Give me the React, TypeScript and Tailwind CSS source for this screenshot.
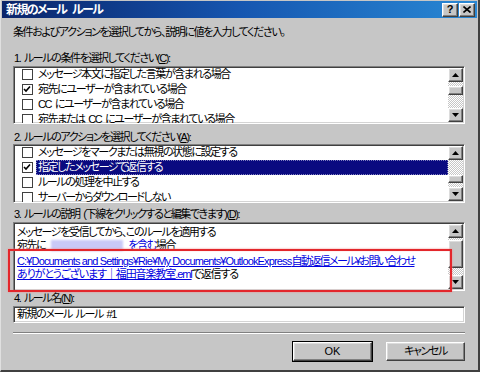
import { FC, ReactNode } from "react";

const raised =
  "border border-t-white border-l-white border-r-[#404040] border-b-[#404040] shadow-[inset_-1px_-1px_0_#808080,inset_1px_1px_0_#dcdcdc]";
const sunken =
  "border border-t-[#808080] border-l-[#808080] border-r-white border-b-white shadow-[inset_1px_1px_0_#404040,inset_-1px_-1px_0_#d4d4d4]";
const link = "text-[#0000e0] underline underline-offset-1";

const Arrow: FC<{ up?: boolean }> = ({ up }) => (
  <div className={`h-[14px] w-[15px] bg-[#c6c6c6] flex items-center justify-center shrink-0 ${raised}`}>
    <svg width="7" height="4" viewBox="0 0 7 4">
      {up ? <path d="M3.5 0 L7 4 L0 4 Z" fill="#000" /> : <path d="M0 0 L7 0 L3.5 4 Z" fill="#000" />}
    </svg>
  </div>
);

const ScrollBar: FC<{ before: number; thumb: number }> = ({ before, thumb }) => (
  <div className="w-[15px] h-full flex flex-col bg-[repeating-conic-gradient(#c6c6c6_0_25%,#ffffff_0_50%)] bg-[length:2px_2px]">
    <Arrow up />
    <div className="flex-1 flex flex-col">
      <div style={{ height: before }} />
      <div className={`w-[15px] bg-[#c6c6c6] ${raised}`} style={{ height: thumb }} />
    </div>
    <Arrow />
  </div>
);

const Check: FC<{ on?: boolean }> = ({ on }) => (
  <div className="w-[11px] h-[11px] border border-[#404040] bg-white flex items-center justify-center shrink-0">
    {on && (
      <svg width="9" height="9" viewBox="0 0 9 9">
        <path d="M1 4 L3 6 L7 1.5" stroke="#000" strokeWidth="1.6" fill="none" />
      </svg>
    )}
  </div>
);

const Row: FC<{ on?: boolean; sel?: boolean; children: ReactNode }> = ({ on, sel, children }) => (
  <div className="h-[15px] flex items-center pl-[8px] shrink-0">
    <Check on={on} />
    <span
      className={`ml-[3px] h-[15px] flex-1 flex items-center pl-[2px] whitespace-pre ${
        sel ? "bg-[#0a0a80] text-white outline outline-1 outline-dotted outline-offset-[-1px] outline-[#8080c0]" : ""
      }`}
    >
      {children}
    </span>
  </div>
);

const ListBox: FC<{ h: number; before: number; thumb: number; children: ReactNode }> = ({
  h,
  before,
  thumb,
  children,
}) => (
  <div className={`bg-white flex ${sunken}`} style={{ height: h }}>
    <div className="flex-1 flex flex-col overflow-hidden">{children}</div>
    <div className="py-[1px] pr-[1px]">
      <ScrollBar before={before} thumb={thumb} />
    </div>
  </div>
);

const Label: FC<{ children: ReactNode }> = ({ children }) => (
  <div className="h-[14px] leading-[14px] whitespace-pre">{children}</div>
);

const App: FC = () => {
  return (
    <div className="w-[480px] h-[372px] overflow-hidden bg-[#c6c6c6] text-[11px] tracking-[-1.4px] [word-spacing:2px] text-black font-['Liberation_Sans','Noto_Sans_CJK_JP',sans-serif] [font-feature-settings:'palt'] border-l border-l-[#e0e0e0] border-r-2 border-r-[#404040] border-b-2 border-b-[#404040] flex flex-col">
      <header className="h-[17px] mx-[1px] mt-[1px] flex items-center justify-between bg-gradient-to-r from-[#0a246a] via-[#1656b0] to-[#2a88d4]">
        <h1 className="pl-[4px] text-white font-bold text-[12px] tracking-[-1.6px] [word-spacing:4px]">新規のメール ルール</h1>
        <div className="flex pr-[2px]">
          <div className={`w-[16px] h-[14px] bg-[#c6c6c6] flex items-center justify-center font-bold text-[11px] leading-none tracking-normal ${raised}`}>
            ?
          </div>
          <div className={`ml-[1px] w-[16px] h-[14px] bg-[#c6c6c6] flex items-center justify-center ${raised}`}>
            <svg width="8" height="7" viewBox="0 0 8 7">
              <path d="M0.5 0.5 L7.5 6.5 M7.5 0.5 L0.5 6.5" stroke="#000" strokeWidth="1.6" />
            </svg>
          </div>
        </div>
      </header>

      <section className="pl-[12px] pr-[13px] flex flex-col">
        <div className="mt-[7px]">
          <Label>条件およびアクションを選択してから、説明に値を入力してください。</Label>
        </div>

        <div className="mt-[12px] pl-[1px]">
          <Label>
            1. ルールの条件を選択してください(<u>C</u>):
          </Label>
        </div>
        <div className="mt-[1px]">
          <ListBox h={58} before={4} thumb={9}>
            <Row>メッセージ本文に指定した言葉が含まれる場合</Row>
            <Row on>宛先にユーザーが含まれている場合</Row>
            <Row>CC にユーザーが含まれている場合</Row>
            <Row>宛先または CC にユーザーが含まれている場合</Row>
          </ListBox>
        </div>

        <div className="mt-[6px] pl-[1px]">
          <Label>
            2. ルールのアクションを選択してください(<u>A</u>):
          </Label>
        </div>
        <div className="mt-[0px]">
          <ListBox h={59} before={15} thumb={8}>
            <Row>メッセージをマークまたは無視の状態に設定する</Row>
            <Row on sel>
              指定したメッセージで返信する
            </Row>
            <Row>ルールの処理を中止する</Row>
            <Row>サーバーからダウンロードしない</Row>
          </ListBox>
        </div>

        <div className="mt-[4px] pl-[1px]">
          <Label>
            3. ルールの説明 (下線をクリックすると編集できます)(<u>D</u>):
          </Label>
        </div>
        <div className="mt-[1px] relative">
          <div className={`bg-white flex h-[69px] ${sunken}`}>
            <div className="flex-1 pl-[3px] pt-[3px] leading-[13px] overflow-hidden">
              <div className="whitespace-nowrap">メッセージを受信してから、このルールを適用する</div>
              <div className="whitespace-nowrap flex items-center">
                宛先に
                <span className="inline-block w-[72px] h-[11px] ml-[6px] mr-[5px] bg-[#c9c9f7] blur-[1px]" />
                <span className={link}>を含む</span>場合
              </div>
              <div className={`mt-[3px] whitespace-nowrap tracking-[-1.6px] ${link}`}>
                <span className="tracking-[-0.85px] [word-spacing:0px]">C:¥Documents and Settings¥Rie¥My Documents¥OutlookExpress</span>
                自動返信メール¥お問い合わせ
              </div>
              <div className="whitespace-nowrap tracking-[-1.1px]">
                <span className={link}>ありがとうございます｜福田音楽教室.eml</span>で返信する
              </div>
            </div>
            <div className="py-[1px] pr-[1px]">
              <ScrollBar before={2} thumb={28} />
            </div>
          </div>
          <div className="absolute left-[-5px] top-[27px] w-[444px] h-[43px] border-2 border-[#e3262b] shadow-[0_0_2px_#f09090,inset_0_0_1px_#f09090]" />
        </div>

        <div className="mt-[0px] pl-[1px]">
          <Label>
            4. ルール名(<u>N</u>):
          </Label>
        </div>
        <div className={`mt-[1px] h-[17px] bg-white pl-[3px] flex items-center whitespace-pre ${sunken}`}>
          新規のメール ルール #1
        </div>

        <div className="mt-[9px] h-[2px] border-t border-t-[#808080] border-b border-b-white" />

        <div className="mt-[8px] flex justify-end gap-[14px]">
          <button className={`w-[79px] h-[19px] bg-[#c6c6c6] outline outline-1 outline-black flex items-center justify-center tracking-normal ${raised}`}>
            OK
          </button>
          <button className={`w-[79px] h-[19px] bg-[#c6c6c6] flex items-center justify-center ${raised}`}>
            キャンセル
          </button>
        </div>
      </section>
    </div>
  );
};

export default App;
